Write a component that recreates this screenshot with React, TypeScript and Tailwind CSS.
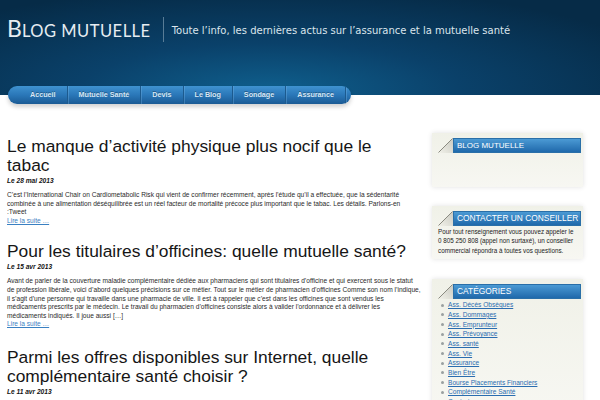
import React from 'react'

const navItems = ['Accueil', 'Mutuelle Santé', 'Devis', 'Le Blog', 'Sondage', 'Assurance']

const categories = [
  'Ass. Décès Obsèques',
  'Ass. Dommages',
  'Ass. Emprunteur',
  'Ass. Prévoyance',
  'Ass. santé',
  'Ass. Vie',
  'Assurance',
  'Bien Être',
  'Bourse Placements Financiers',
  'Complémentaire Santé',
  'Contrat',
]

function Fold() {
  return (
    <svg width="15" height="15" viewBox="0 0 15 15" className="shrink-0">
      <defs>
        <linearGradient id="fold" x1="0" y1="1" x2="1" y2="0">
          <stop offset="0" stopColor="#f2f2ea" />
          <stop offset="1" stopColor="#c9c9c0" />
        </linearGradient>
      </defs>
      <polygon points="0,15 15,0 15,15" fill="url(#fold)" />
      <line x1="0.5" y1="14.5" x2="14.5" y2="0.5" stroke="#8a8a80" strokeWidth="1" />
    </svg>
  )
}

function Widget({ title, titleSize, children }: { title: string; titleSize: string; children?: React.ReactNode }) {
  return (
    <div className="bg-gradient-to-b from-[#f0f1e8] to-[#f7f7f2] shadow-[0_0_5px_rgba(0,0,0,0.12)] pl-[6px] pr-[2px] pt-[5px] pb-[4px]">
      <div className="flex items-stretch h-[15px]">
        <Fold />
        <div className={`flex-1 flex items-center pl-[3px] whitespace-nowrap text-white bg-gradient-to-b from-[#4b9ad4] to-[#1f69ab] border border-[#2a6fa8] ${titleSize}`}>
          {title}
        </div>
      </div>
      {children}
    </div>
  )
}

function Article({ title, date, className, children }: { title: string; date: string; className?: string; children: React.ReactNode }) {
  return (
    <article className={className}>
      <h2 className="max-w-[410px] text-[17.4px] leading-[19px] text-[#161616]">{title}</h2>
      <p className="mt-[2px] text-[6.6px] leading-[8px] font-bold italic text-[#111]">{date}</p>
      {children}
    </article>
  )
}

export default function App() {
  return (
    <div className="w-[600px] h-[400px] overflow-hidden bg-white font-['Liberation_Sans',Arial,sans-serif]">
      {/* Header */}
      <header className="h-[95px] bg-[radial-gradient(ellipse_70%_110%_at_45%_95%,#0f5f8d_0%,#0a416a_45%,#062b47_100%)] flex items-start pl-[7px] pt-[17px]">
        <div className="font-['Lato',sans-serif] text-[#e6edf2] leading-none flex items-baseline">
          <span className="text-[23px]">B</span>
          <span className="text-[16.5px] tracking-[0.5px]">LOG MUTUELLE</span>
        </div>
        <div className="ml-[12px] w-px h-[25px] bg-[#587c96]" />
        <p className="ml-[8px] mt-[6px] font-['DejaVu_Sans',sans-serif] text-[10px] text-[#dbe5ec]">
          Toute l’info, les dernières actus sur l’assurance et la mutuelle santé
        </p>
      </header>

      {/* Nav */}
      <nav className="relative -mt-[9px] ml-[8px] w-[343px] h-[18px] rounded-[9px] overflow-hidden bg-gradient-to-b from-[#3f92d0] via-[#2a77b8] to-[#1a5a94] shadow-[0_3px_4px_rgba(0,0,0,0.18)] flex items-center pl-[11px]">
        {navItems.map((item) => (
          <div
            key={item}
            className="h-full flex items-center whitespace-nowrap px-[11px] border-r border-r-[#1c5a8e] shadow-[1px_0_0_rgba(120,180,230,0.35)] text-[7.2px] font-bold text-[#d6e7f5] [text-shadow:0_-1px_0_rgba(0,0,0,0.3)]"
          >
            {item}
          </div>
        ))}
      </nav>

      {/* Content */}
      <div className="flex mt-[33px] pl-[7px]">
        <main className="w-[414px] flex flex-col">
          <Article title="Le manque d’activité physique plus nocif que le tabac" date="Le 28 mai 2013">
            <p className="mt-[6px] text-[6.6px] leading-[8.6px] text-[#2a2a2a]">
              C’est l’International Chair on Cardiometabolic Risk qui vient de confirmer récemment, après l’étude qu’il a effectuée, que la sédentarité combinée à une alimentation déséquilibrée est un réel facteur de mortalité précoce plus important que le tabac. Les détails. Parlons-en :Tweet
            </p>
            <a href="#" className="block text-[6.6px] leading-[8.6px] text-[#3a80c2] underline">Lire la suite …</a>
          </Article>

          <Article className="mt-[17px]" title="Pour les titulaires d’officines: quelle mutuelle santé?" date="Le 15 avr 2013">
            <p className="mt-[6px] text-[6.6px] leading-[8.6px] text-[#2a2a2a]">
              Avant de parler de la couverture maladie complémentaire dédiée aux pharmaciens qui sont titulaires d’officine et qui exercent sous le statut de profession libérale, voici d’abord quelques précisions sur ce métier. Tout sur le métier de pharmacien d’officines Comme son nom l’indique, il s’agit d’une personne qui travaille dans une pharmacie de ville. Il est à rappeler que c’est dans les officines que sont vendus les médicaments prescrits par le médecin. Le travail du pharmacien d’officines consiste alors à valider l’ordonnance et à délivrer les médicaments indiqués. Il joue aussi […]
            </p>
            <a href="#" className="block text-[6.6px] leading-[8.6px] text-[#3a80c2] underline">Lire la suite …</a>
          </Article>

          <Article className="mt-[19px]" title="Parmi les offres disponibles sur Internet, quelle complémentaire santé choisir ?" date="Le 11 avr 2013">
            <p className="mt-[6px] text-[6.6px] leading-[8.6px] text-[#2a2a2a]">…</p>
          </Article>
        </main>

        <aside className="ml-[11px] w-[151px] flex flex-col -mt-[4px]">
          <Widget title="BLOG MUTUELLE" titleSize="text-[8px]">
            <div className="h-[30px]" />
          </Widget>
          <div className="mt-[19px]">
            <Widget title="CONTACTER UN CONSEILLER" titleSize="text-[8.4px]">
              <p className="mt-[1px] text-[6.3px] leading-[9.4px] text-[#222] whitespace-nowrap">
                Pour tout renseignement vous pouvez appeler le
                <br />
                0 805 250 808 (appel non surtaxé), un conseiller
                <br />
                commercial répondra à toutes vos questions.
              </p>
            </Widget>
          </div>
          <div className="mt-[20px]">
            <Widget title="CATÉGORIES" titleSize="text-[8.4px]">
              <ul className="mt-[1px] pl-[3px]">
                {categories.map((c) => (
                  <li key={c} className="flex items-center h-[9.7px] text-[6.6px]">
                    <span className="w-[3px] h-[3px] rounded-full bg-[#9aa0a0] mr-[4px]" />
                    <a href="#" className="text-[#2a6db0] underline">{c}</a>
                  </li>
                ))}
              </ul>
            </Widget>
          </div>
        </aside>
      </div>
    </div>
  )
}
